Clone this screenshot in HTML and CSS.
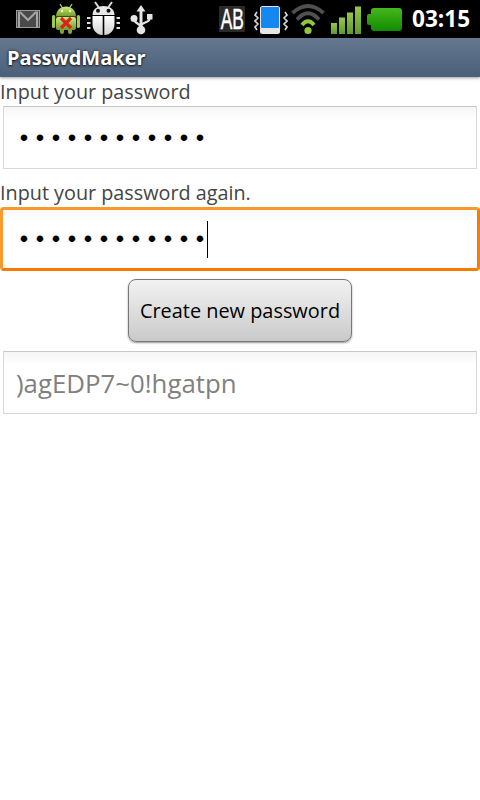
FILE: index.html
```html
<!DOCTYPE html>
<html lang="en">
<head>
<meta charset="utf-8">
<title>PasswdMaker</title>
<link rel="stylesheet" href="styles.css">
</head>
<body>
<header class="status">
  <div class="status-left">
    <svg class="ic-gmail" width="24" height="38" viewBox="0 0 24 38"><rect x="0.5" y="10.5" width="23" height="17" fill="#4a4a4a" stroke="#9c9c9c"/><path d="M3 27V12.5h1.5L12 20l7.5-7.5H21V27" fill="none" stroke="#a6a6a6" stroke-width="2"/></svg>
    <svg class="ic-droid" width="28" height="38" viewBox="0 0 28 38"><defs><linearGradient id="dg" x1="0" y1="0" x2="0" y2="1"><stop offset="0" stop-color="#cfe77c"/><stop offset="1" stop-color="#6f9c26"/></linearGradient></defs><path d="M8 4l2.500 4M20 4l-2.500 4" stroke="#a8c95a" stroke-width="1.400"/><path d="M4 16.500C4 10 9 6.500 14 6.500s10 3.500 10 10z" fill="url(#dg)"/><rect x="4" y="17" width="20" height="13" rx="2" fill="url(#dg)"/><rect x="0" y="15" width="3.200" height="13" rx="1.600" fill="#a3c94e"/><rect x="24.800" y="15" width="3.200" height="13" rx="1.600" fill="#a3c94e"/><rect x="8" y="28" width="4" height="6" rx="2" fill="#7ea436"/><rect x="16" y="28" width="4" height="6" rx="2" fill="#7ea436"/><circle cx="10" cy="11" r="1.200" fill="#f2f7d8"/><circle cx="18" cy="11" r="1.200" fill="#f2f7d8"/><path d="M9 18l10 10M19 18L9 28" stroke="#d9241a" stroke-width="3.200"/></svg>
    <svg class="ic-bug" width="33" height="38" viewBox="0 0 33 38"><defs><linearGradient id="bu" x1="0" y1="0" x2="0" y2="1"><stop offset="0" stop-color="#fff"/><stop offset="1" stop-color="#d2d2d2"/></linearGradient></defs><path d="M8 2l3.500 5M25 2l-3.500 5" stroke="#ddd" stroke-width="2"/><path d="M5.500 15C5.500 9 10.500 6 16.500 6s11 3 11 9z" fill="#e8e8e8"/><circle cx="11" cy="10.700" r="2" fill="#111"/><circle cx="21.500" cy="10.700" r="2" fill="#111"/><path d="M5.500 16H15.700V35C9.500 35 5.500 30 5.500 24z" fill="url(#bu)"/><path d="M17.300 16H27.500V24C27.500 30 23.500 35 17.300 35z" fill="url(#bu)"/><path d="M0 18h3.500M0 23h3.500M0 28h3.500M29.500 18H33M29.500 23H33M29.500 28H33" stroke="#ddd" stroke-width="2"/></svg>
    <svg class="ic-usb" width="24" height="38" viewBox="0 0 24 38"><path d="M11 5l4.500 6.500h-3V28h-3V11.500h-3z" fill="#e4e4e4"/><circle cx="11" cy="30" r="4.300" fill="#e4e4e4"/><path d="M4 19c0 5 7 4 7 9M19.500 19c0 4-8.500 3-8.500 7" fill="none" stroke="#e4e4e4" stroke-width="2.200"/><circle cx="4" cy="18.500" r="3.500" fill="#e4e4e4"/><rect x="17" y="14" width="5.500" height="5.500" fill="#e4e4e4"/></svg>
  </div>
  <div class="status-right">
    <div class="ab"><span>AB</span></div>
    <svg class="ic-vib" width="34" height="38" viewBox="0 0 34 38"><path d="M3 12l-2 3 3 3-3 3 3 3-3 3 2 3M31 12l2 3-3 3 3 3-3 3 3 3-2 3" fill="none" stroke="#d8d8d8" stroke-width="1.600"/><rect x="6" y="6" width="20" height="28" rx="2.500" fill="#e6e6e6"/><rect x="7" y="7" width="18" height="21" rx="1" fill="#1587f0"/></svg>
    <svg class="ic-wifi" width="36" height="38" viewBox="0 0 36 38"><path d="M2.500 13Q18-1 33.500 13" fill="none" stroke="#505050" stroke-width="3.800"/><path d="M7 19.500Q18 7 29 19.500" fill="none" stroke="#505050" stroke-width="3.800"/><path d="M12 25Q18 17.500 24 25" fill="none" stroke="#90c83e" stroke-width="3.800"/><circle cx="18" cy="30.500" r="3.600" fill="#90c83e"/></svg>
    <svg class="ic-signal" width="30" height="38" viewBox="0 0 30 38"><defs><linearGradient id="sg" x1="0" y1="0" x2="0" y2="1"><stop offset="0" stop-color="#93c84a"/><stop offset="1" stop-color="#5e9a2c"/></linearGradient></defs><rect x="0" y="23" width="6" height="11" fill="url(#sg)"/><rect x="8" y="17.500" width="6" height="16.500" fill="url(#sg)"/><rect x="16" y="12.500" width="6" height="21.500" fill="url(#sg)"/><rect x="24" y="6.500" width="6" height="27.500" fill="url(#sg)"/></svg>
    <svg class="ic-batt" width="35" height="38" viewBox="0 0 35 38"><defs><linearGradient id="bg" x1="0" y1="0" x2="0" y2="1"><stop offset="0" stop-color="#45b81c"/><stop offset="1" stop-color="#108a00"/></linearGradient></defs><path d="M4 11a3 3 0 0 1 3-3h25a3 3 0 0 1 3 3v17a3 3 0 0 1-3 3H7a3 3 0 0 1-3-3v-3H2a2 2 0 0 1-2-2v-7a2 2 0 0 1 2-2h2z" fill="url(#bg)"/></svg>
    <span class="clock">03:15</span>
  </div>
</header>
<div class="titlebar"><h1 class="title">PasswdMaker</h1></div>
<main class="content">
  <label class="label">Input your password</label>
  <div class="field"><span class="dots">••••••••••••</span></div>
  <label class="label label-second">Input your password again.</label>
  <div class="field field-focus"><span class="dots">••••••••••••</span><span class="caret"></span></div>
  <div class="button-row"><button class="button">Create new password</button></div>
  <div class="field field-output"><span class="output">)agEDP7~0!hgatpn</span></div>
</main>
</body>
</html>
```
FILE: styles.css
```css
* { box-sizing: border-box; }
html, body { margin: 0; padding: 0; }
body { width: 480px; height: 800px; background: #fff; font-family: "Open Sans", "Noto Sans", sans-serif; overflow: hidden; }
.status { height: 38px; background: #000; display: flex; justify-content: space-between; }
.status-left { display: flex; }
.status-right { display: flex; }
.status svg { flex: none; }
.ic-gmail { margin-left: 16px; }
.ic-droid { margin-left: 12px; }
.ic-bug { margin-left: 7px; }
.ic-usb { margin-left: 10px; }
.ab { width: 26px; height: 26px; margin-top: 6px; background: #2a2a2a; display: flex; align-items: center; justify-content: center; color: #fff; }
.ab span { flex: none; font-family: "Liberation Sans", sans-serif; font-size: 29px; line-height: 26px; transform: scaleX(.6); -webkit-text-stroke: .5px #fff; }
.ic-vib { margin-left: 9px; }
.ic-wifi { margin-left: 2px; }
.ic-signal { margin-left: 5px; }
.ic-batt { margin-left: 6px; }
.clock { margin-left: 10px; margin-right: 9px; width: 59px; line-height: 38px; color: #fff; font-size: 22.6px; font-weight: 700; white-space: nowrap; }
.titlebar { height: 39px; background: linear-gradient(#66788f, #4b5f7a); display: flex; align-items: center; padding-left: 7px; box-shadow: 0 1px 3px rgba(0,0,0,.4); position: relative; }
.title { margin: 0; color: #fff; font-size: 20px; font-weight: 700; text-shadow: 0 0 3px rgba(0,0,0,.8), 0 1px 2px rgba(0,0,0,.6); }
.content { display: flex; flex-direction: column; }
.label { display: block; height: 29px; line-height: 29px; color: #444; font-size: 19.8px; }
.label-second { height: 28px; line-height: 28px; margin-top: 10px; }
.field { height: 63px; margin: 0 3px; border: 1px solid #d8d8d8; border-top-color: #c8c8c8; background: linear-gradient(#f5f5f5, #fff 20%); display: flex; align-items: center; padding-left: 15.8px; }
.dots { color: #000; font-family: "Liberation Sans", sans-serif; font-size: 24px; letter-spacing: 7.6px; }
.field-focus { margin: 0; height: 64px; border: 3px solid; border-color: #fb9a2c #f57d05 #f47a00 #fb9a2c; border-radius: 4px; padding-left: 16.8px; background: linear-gradient(#f8f8f8, #fff 20%); }
.caret { flex: none; width: 1px; height: 37px; background: #000; margin-left: -4.8px; }
.button-row { display: flex; justify-content: center; margin-top: 8px; }
.button { width: 224px; height: 63px; border: 1px solid #777; border-radius: 8px; background: linear-gradient(#f2f2f2, #cacaca); box-shadow: 0 1px 2px rgba(0,0,0,.4); color: #000; font-family: inherit; font-size: 19.9px; padding: 0; }
.field-output { margin-top: 9px; padding-left: 12px; }
.output { color: #808080; font-size: 25.8px; }
```
